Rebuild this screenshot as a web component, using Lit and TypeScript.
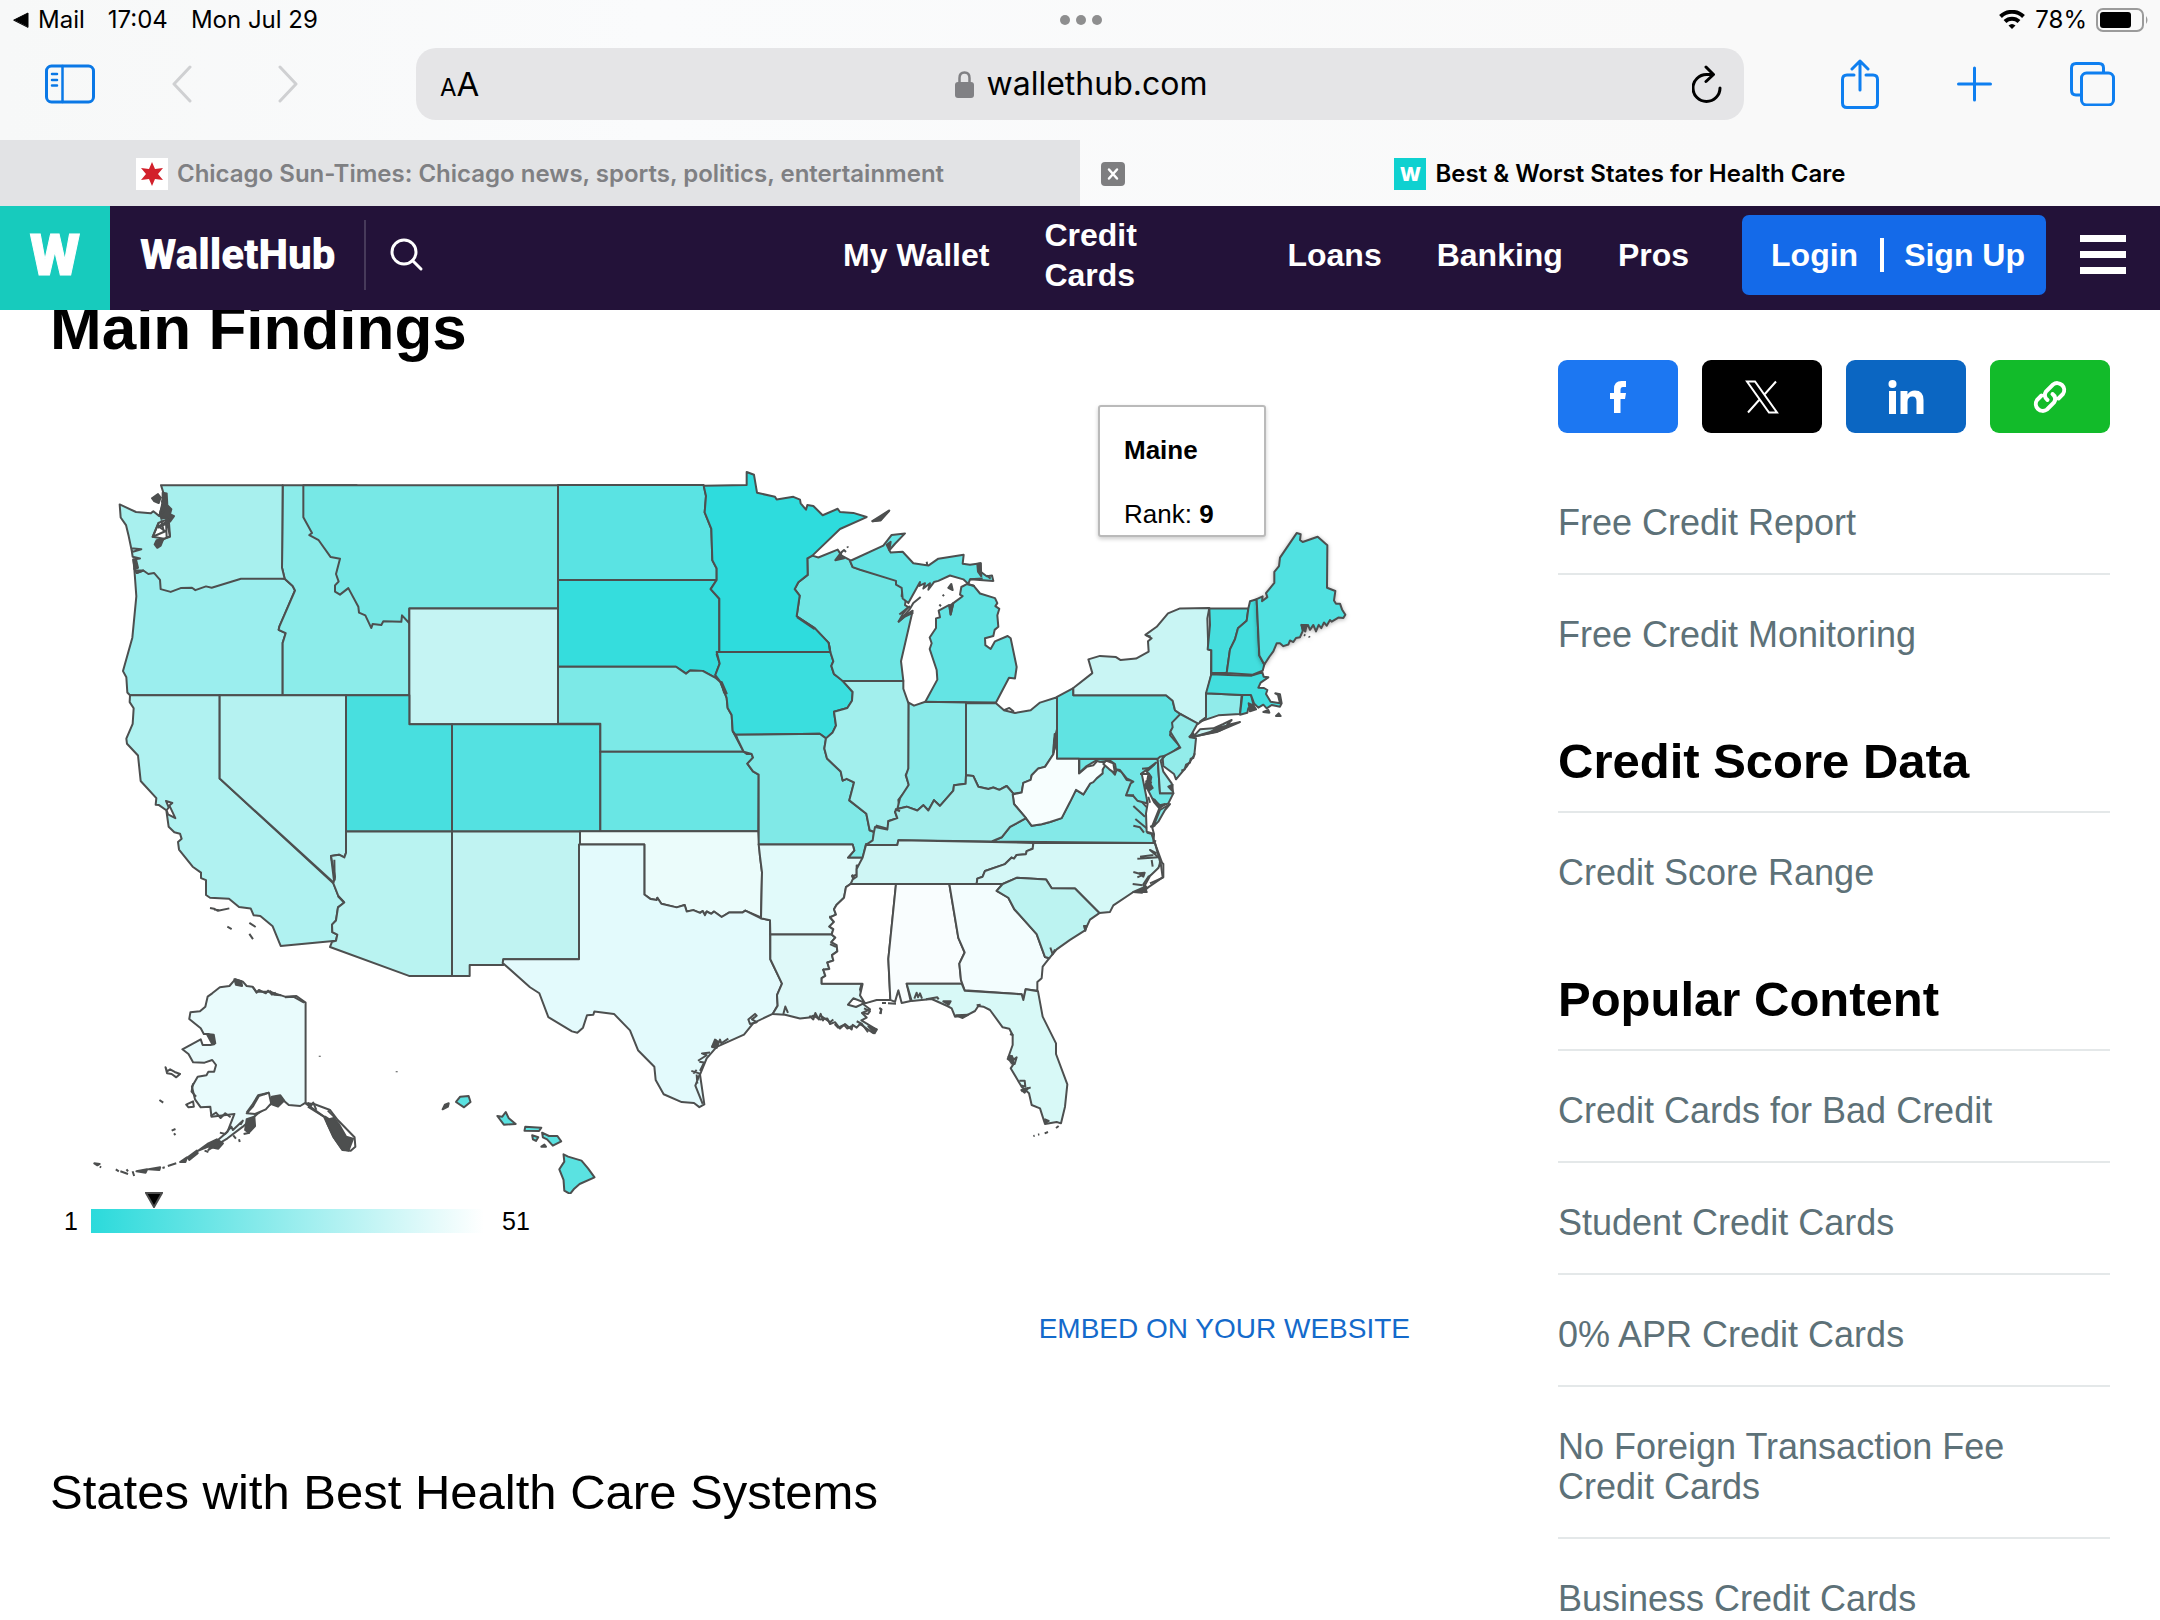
import { LitElement, html, svg, css } from "lit";
import { customElement } from "lit/decorators.js";

interface Shape {
  name: string;
  fill: string;
  d: string;
}

interface Region {
  transform: string;
  shapes: Shape[];
  islands?: string;
  water?: string;
  coast?: string;
}

const s = (name: string, fill: string, d: string): Shape => ({ name, fill, d });

const THIRD = 1 / 3;

/* Each region keeps its own drawing grid and is placed on the map by a transform. */
const REGIONS: Region[] = [
  {
    transform: `translate(90 450) scale(${THIRD} .3444)`,
    shapes: [
      s("Oregon", "#9beeee", "M133,345 L139,425 127,545 99,642 109,660 112,704 120,712 H578 V560 L587,532 566,522 568,513 615,408 608,395 584,374 500,360 300,380 200,350Z"),
      s("Idaho", "#8cecea", "M578,102 H800 V430 L844,480 H958 V712 H578 V560 L587,532 566,522 568,513 615,408 608,395 584,374 576,342Z"),
      s("Washington", "#a8f0ee", "M213,102 H578 L576,342 584,374 H453 L365,400 348,396 316,407 306,400 272,401 242,412 212,404 210,377 192,357 175,360 160,350 140,357 133,345 130,318 150,315 128,310 124,285 154,288 126,296 116,250 108,218 92,196 89,158 138,180 182,184 190,178 208,192 216,160 222,130Z"),
      s("Montana", "#77e8e6", "M640,102 H1404 V460 H958 V503 L936,480 934,499 880,497 874,508 848,505 844,517 826,480 807,472 805,455 775,401 750,420 735,411 735,393 746,382 738,360 750,316 722,311 686,262 658,247 666,241 640,195Z"),
      s("Wyoming", "#c5f4f3", "M958,460 H1404 V796 H958Z"),
      s("California", "#b0f2f1", "M120,712 L119,732 131,750 128,795 109,838 111,853 144,887 152,961 199,1011 197,1030 207,1031 229,1046 236,1094 253,1110 270,1114 275,1129 264,1138 267,1160 308,1210 333,1227 333,1243 348,1249 348,1292 360,1300 417,1303 447,1327 482,1331 491,1351 511,1353 548,1383 572,1440 738,1425 742,1407 727,1400 726,1378 738,1366 744,1328 763,1314 745,1295 730,1258 389,954 V712Z"),
      s("Nevada", "#b5f2f1", "M389,712 H768 V1170 L763,1183 747,1175 723,1179 733,1258 389,954Z"),
      s("Utah", "#48dfdf", "M768,712 H958 V796 H1086 V1108 H768Z"),
      s("Arizona", "#b9f3f1", "M768,1108 H1086 V1527 H957 L720,1443 726,1428 738,1425 742,1407 727,1400 726,1378 738,1366 744,1328 763,1314 745,1295 730,1258 735,1240 723,1179 747,1175 763,1183 768,1170Z"),
      s("Colorado", "#54e1e1", "M1086,796 H1531 V1108 H1086Z"),
      s("New Mexico", "#c0f3f2", "M1086,1108 H1470 V1479 H1240 V1495 H1139 V1527 H1086Z"),
    ],
    water: "M228,1019 L247,1025 238,1032 256,1069 234,1058 230,1046 236,1038Z M205,212 L236,200 240,250 222,258 188,252Z",
    islands:
      "M186,140 L204,128 212,138 206,154 192,148Z M218,124 L230,126 232,160 244,172 240,186 252,192 240,208 228,196 214,200 210,182 218,160Z M200,262 L220,258 212,278 202,284 194,274Z M130,318 L138,318 144,342 134,346Z",
    coast:
      "M222,130 L216,150 228,168 212,190 236,204 206,222 226,236 188,252 206,212 M230,200 L240,252 222,258 206,270 M214,204 L222,240 M204,226 L232,212 M228,206 L230,254 M360,1330 L372,1332 384,1338 418,1331 M372,1334 L388,1336 M412,1384 L425,1391 M478,1373 L497,1385 M478,1405 L489,1420 M136,350 L160,350 140,357 M733,1190 L734,1250 M744,1296 L762,1313",
  },
  {
    transform: `translate(540 450) scale(${THIRD} .4592)`,
    shapes: [
      s("North Dakota", "#5ae3e3", "M54,76 H491 L498,100 494,136 514,172 517,240 530,258 530,283 H54Z"),
      s("South Dakota", "#35dddd", "M54,283 H530 L512,303 538,324 538,440 530,445 539,465 526,490 540,502 528,497 488,481 450,480 438,487 408,472 H54Z"),
      s("Nebraska", "#7ce9e7", "M54,472 H408 L438,487 450,480 488,481 528,497 541,505 560,540 563,562 575,577 578,612 611,657 H181 V596 H54Z"),
      s("Kansas", "#69e6e4", "M181,657 H611 L620,662 635,662 639,670 622,683 639,700 656,707 655,830 H181Z"),
      s("Oklahoma", "#ebfcfb", "M120,830 H655 L660,885 666,920 663,1018 616,1003 608,1007 568,1007 545,1017 522,1005 514,1010 500,1005 495,1013 488,1004 480,1008 460,1002 440,1005 434,991 410,996 364,988 352,975 350,980 332,978 313,968 V859 H120Z"),
      s("Texas", "#e3fafc", "M117,859 H313 V968 L332,978 350,980 352,975 364,988 410,996 434,991 440,1005 460,1002 480,1008 488,1004 495,1013 500,1005 514,1010 522,1005 545,1017 568,1007 608,1007 616,1003 663,1020 690,1024 691,1109 726,1162 711,1187 713,1210 698,1228 640,1248 612,1273 530,1300 500,1325 480,1360 493,1425 478,1431 462,1422 425,1420 371,1403 347,1372 343,1343 294,1307 270,1264 222,1228 163,1223 160,1230 141,1231 129,1258 112,1269 96,1266 25,1235 -2,1183 -30,1170 -112,1117 -110,1109 H117Z"),
      s("Iowa", "#3adede", "M530,440 H871 L880,460 874,470 882,488 908,501 938,527 936,546 922,562 882,570 888,600 878,615 858,628 839,618 586,620 578,612 575,577 563,562 560,540 541,505 526,490 539,465Z"),
      s("Wisconsin", "#6ee6e4", "M802,236 L817,230 835,234 893,217 905,230 930,240 938,255 1070,283 1070,292 1088,300 1085,318 1098,322 1095,338 1105,342 1090,355 1076,374 1100,358 1118,350 1083,460 1090,503 H908 L882,488 874,470 880,460 871,440 866,420 824,388 770,362 779,317 764,303 775,288 803,272Z"),
      s("Minnesota", "#2edcdd", "M491,78 L620,76 620,48 642,54 651,93 705,102 710,108 760,102 780,108 782,116 798,130 802,120 820,122 848,142 893,128 900,135 940,137 980,146 900,172 817,230 802,236 803,272 775,288 764,303 779,317 770,362 824,388 866,420 871,440 H538 V324 L512,303 530,283 530,258 517,240 514,172 494,136 498,100Z"),
      s("Missouri", "#80e9e7", "M586,620 L839,618 858,628 853,650 861,672 902,700 908,720 920,716 942,724 928,763 979,792 989,828 1002,832 998,858 978,858 968,888 924,888 943,872 938,859 H656 V707 L639,700 622,683 639,670 635,662 611,657Z"),
      s("Arkansas", "#e1fafa", "M656,859 H938 L943,872 924,888 968,888 958,905 950,905 950,925 936,928 944,940 932,945 918,952 912,975 890,990 882,1000 888,1012 870,1018 882,1028 868,1038 880,1044 875,1055 H691 L690,1024 663,1020 666,920 660,885Z"),
      s("Louisiana", "#dff9f9", "M691,1055 H875 L886,1062 874,1072 890,1078 892,1092 876,1100 880,1112 862,1116 868,1130 850,1132 856,1145 845,1150 845,1162 H965 L960,1175 972,1203 940,1194 924,1208 948,1213 968,1206 990,1218 966,1226 980,1236 964,1242 1010,1262 1000,1270 960,1250 950,1258 938,1252 935,1262 915,1250 900,1260 885,1246 870,1250 862,1238 840,1240 820,1232 808,1236 780,1238 735,1230 698,1228 713,1210 711,1187 726,1162 691,1109Z"),
      s("Illinois", "#a2efed", "M908,503 H1090 L1090,520 1106,553 V695 L1097,708 1108,732 1075,762 1078,780 1065,788 1072,802 1045,808 1045,825 1010,818 1004,832 989,828 979,792 928,763 942,724 920,716 908,720 902,700 861,672 853,650 858,628 878,615 888,600 882,570 922,562 936,546 938,527Z"),
    ],
    islands:
      "M998,155 L1015,150 1047,133 1022,152Z M886,240 L905,222 900,232 912,236Z M545,505 L560,530 552,528Z M525,1284 L536,1290 530,1302 516,1300Z M985,1255 L1010,1262 1004,1270Z",
    coast:
      "M625,1240 L645,1228 650,1232 636,1240 650,1246 630,1250Z M730,1228 L736,1212 744,1226 M454,1352 L480,1358 466,1384 488,1424 M470,1360 L472,1380 M460,1358 L470,1350 M474,1330 L500,1318 486,1314 510,1312 M478,1332 L492,1334 480,1352 M516,1300 L528,1286 532,1296 540,1284 544,1292 565,1282 M808,1232 L820,1240 826,1226 836,1240 842,1228 850,1244 M846,1234 L870,1246 880,1240 M884,1250 L894,1258 912,1252 922,1260 936,1254 M950,1244 L966,1250 984,1268 M972,1216 L990,1222 984,1228 968,1226 M1018,1215 L1024,1218 1020,1228 M905,222 L912,218 918,222 M922,210 L924,213 M965,1206 L1010,1196 1048,1196 M771,364 L824,390 M866,420 L870,438 M578,612 L592,628 M868,1016 L884,1020 M870,1076 L888,1082 M848,1130 L860,1138 M935,925 L948,934",
  },
  {
    transform: `translate(860 450) scale(${THIRD} .3827)`,
    shapes: [
      s("Michigan", "#64e4e4", "M-30,290 L70,250 95,222 135,218 105,245 88,262 92,268 128,266 160,296 205,302 235,284 311,274 308,297 330,300 362,296 362,318 380,330 396,328 400,342 330,338 325,350 310,338 270,328 235,342 222,345 205,365 210,348 190,362 195,348 178,355 180,345 145,400 128,388 125,360 108,352 108,342 0,313 -22,306Z"),
      s("Michigan", "#64e4e4", "M196,658 L232,600 230,575 209,520 215,505 209,490 228,465 228,440 240,437 236,420 268,405 272,430 280,400 308,382 300,378 304,358 322,350 340,354 360,375 405,387 412,400 406,408 418,415 412,432 415,462 404,470 400,486 375,492 376,510 392,520 405,500 443,486 452,492 470,567 465,597 447,595 408,660Z"),
      s("Indiana", "#89eae9", "M146,660 L162,668 196,658 318,660 V850 L317,872 282,876 280,890 240,930 222,915 205,942 190,928 172,942 140,932 112,938 120,910 146,875 138,850 145,832Z"),
      s("Ohio", "#99edec", "M318,662 H408 L432,680 465,687 512,680 540,660 591,646 V730 L582,760 580,795 555,828 535,832 515,850 512,862 490,870 485,895 460,898 440,878 418,888 400,882 385,886 355,880 340,852 318,850Z"),
      s("Pennsylvania", "#60e3e2", "M591,645 L640,622 V641 H918 L938,655 945,680 965,692 932,735 930,745 960,775 925,797 895,807 H591Z"),
      s("New York", "#c9f5f4", "M640,622 L697,583 685,547 720,538 768,541 782,549 828,545 866,527 864,500 875,492 856,483 890,462 924,427 960,414 1048,413 1042,440 1045,520 1054,524 1053,590 1040,638 1038,700 1014,716 965,692 945,680 938,655 918,641 640,641Z"),
      s("Virginia", "#84e9e8", "M395,1023 L425,1012 450,985 498,962 515,982 545,978 570,972 605,962 648,888 670,900 690,872 710,850 728,835 732,812 765,848 770,835 785,842 800,862 823,865 808,900 830,905 862,935 862,1000 882,1005 880,1027Z"),
      s("West Virginia", "#f7fefe", "M591,750 L591,807 H657 V845 L680,828 700,824 712,812 740,818 728,835 728,845 710,858 700,868 690,872 670,900 648,888 630,920 605,962 570,972 545,978 515,982 498,962 462,925 458,900 485,895 490,870 512,862 515,850 535,832 555,828 580,795Z"),
      s("Kentucky", "#a3eeec", "M45,985 L82,992 85,970 112,962 105,945 112,938 140,932 172,942 190,928 205,942 222,915 240,930 280,890 282,876 317,872 318,850 340,852 355,880 385,886 400,882 418,888 440,878 460,898 458,900 462,925 498,962 450,985 425,1012 395,1023 115,1020 112,1032 18,1032 38,1020 42,998Z"),
      s("Tennessee", "#cff6f5", "M18,1032 H112 L115,1020 395,1024 520,1027 518,1042 500,1048 498,1056 470,1058 462,1068 455,1065 435,1082 375,1100 368,1115 352,1120 350,1134 H-28 L-22,1122 -10,1115 -10,1095 0,1078 8,1065Z"),
      s("North Carolina", "#d5f8f7", "M520,1027 H885 L900,1075 898,1090 880,1108 865,1115 850,1135 860,1155 820,1155 760,1190 750,1207 718,1210 645,1146 575,1145 558,1122 470,1118 428,1134 H350 L352,1120 368,1115 375,1100 435,1082 455,1065 462,1068 470,1058 498,1056 500,1048 518,1042Z"),
      s("Mississippi", "#ffffff", "M-28,1134 H108 L85,1330 91,1437 50,1437 15,1446 0,1425 8,1395 H-115 L-115,1380 -104,1374 -110,1358 -92,1356 -98,1339 -80,1334 -84,1320 -68,1310 -70,1294 -86,1286 -74,1274 -85,1266 -80,1252 -92,1245 -78,1233 -90,1221 -72,1214 -78,1200 -70,1188 -48,1170 -42,1142Z"),
      s("Alabama", "#f9fdfe", "M108,1134 H268 L295,1275 314,1313 298,1342 303,1385 308,1395 H140 L152,1440 125,1445 115,1412 105,1442 91,1437 85,1330Z"),
      s("Georgia", "#f3fdfe", "M268,1134 H428 L410,1152 445,1170 463,1200 530,1265 555,1325 568,1328 548,1350 545,1380 532,1390 532,1413 497,1409 490,1437 485,1422 314,1412 303,1385 298,1342 314,1313 295,1275Z"),
      s("South Carolina", "#bcf3f1", "M428,1134 L470,1118 558,1122 575,1145 645,1146 718,1210 690,1227 675,1255 630,1280 590,1305 568,1328 555,1325 530,1265 463,1200 445,1170 410,1152Z"),
    ],
    water: "M732,815 L742,812 762,828 765,848Z",
    islands:
      "M37,186 L55,176 88,158 62,184Z M265,360 L274,350 278,366Z M268,408 L280,400 272,430Z M584,742 L590,742 588,770 580,790Z M80,248 L92,240 88,262Z M352,298 L362,296 364,330 354,318Z M672,1244 L680,1244 676,1256Z",
    coast:
      "M248,378 L252,382 M238,404 L243,408 M322,350 L344,356 M330,338 L368,336 M432,680 L448,674 462,684 M380,328 L392,336 M182,384 L160,400 150,415 116,448 135,435 160,425 M118,430 L150,408 M200,292 L202,302 M571,1300 L578,1318 585,1305 M856,483 L872,488 M105,938 L120,944",
  },
  {
    transform: `translate(1050 640) scale(${THIRD})`,
    shapes: [
      s("Connecticut", "#90ebea", "M468,160 L575,165 570,222 505,226 450,245 468,232Z"),
      s("Rhode Island", "#40dede", "M577,165 H603 L612,200 595,205 592,218 570,224Z"),
      s("Massachusetts", "#42dede", "M484,103 L535,105 605,107 637,97 641,110 655,112 632,128 625,143 642,144 652,150 648,162 662,185 690,190 684,165 676,160 690,163 695,190 690,200 665,195 650,205 640,194 625,203 612,190 603,165 575,165 468,160Z"),
      s("New Jersey", "#93ecea", "M391,222 L443,250 420,292 438,295 433,345 410,380 378,418 372,402 340,378 338,355 345,347 391,323 361,275 368,262 366,248Z"),
      s("Maryland", "#72e7e6", "M88,357 H323 L330,460 H370 L355,490 330,500 315,480 295,470 290,490 262,482 250,468 228,466 235,448 242,430 250,425 230,415 210,390 198,388 195,372 180,362 150,365 138,362 110,378 88,398Z"),
      s("Delaware", "#9ceeee", "M323,357 L330,350 345,347 332,362 340,395 365,430 370,460 330,460Z"),
      s("Virginia", "#84e9e8", "M360,492 L330,510 310,560 325,545 345,510Z"),
      s("New York", "#c9f5f4", "M430,290 L450,268 490,265 520,252 545,240 530,256 570,246 510,272Z"),
    ],
    water: "M318,368 L275,400 285,450 293,490 288,520 290,575 312,582 306,560 328,505 312,486 295,452 302,410 290,395Z M332,668 L325,684 300,708 285,735 290,745 338,712Z M160,372 L168,362 190,370 195,400 178,388Z",
    islands:
      "M296,400 L304,412 300,430 308,444 296,452 286,436 292,420Z M312,480 L330,496 345,492 330,504Z M596,190 L610,196 618,208 600,214Z M640,216 L655,210 658,218Z M678,228 L686,220 692,228Z M505,262 L540,256 500,276 440,288 480,276Z M418,290 L430,280 432,292Z M355,440 L368,434 366,452Z M268,700 L284,698 280,710Z M286,740 L292,744 276,758 250,756Z",
    coast:
      "M434,340 L430,354 422,356 420,368 408,374 404,388 394,392 M250,498 L285,530 M256,537 L290,565 M250,557 L270,562 282,578 M305,583 L336,668 340,672 340,712 300,730 M262,656 L325,652 300,630 320,640 M270,650 L310,645 M305,660 L308,680 M250,696 L280,704 262,712 M248,732 L278,736 M300,560 L316,556 M315,372 L300,384 276,386 M270,402 L300,402 M286,424 L306,428 M284,444 L304,448 M310,600 L318,605 M228,466 L252,466 M295,470 L300,488",
  },
  {
    transform: `translate(860 930) scale(${THIRD})`,
    shapes: [
      s("Florida", "#d8f9f7", "M140,161 H305 L314,182 485,193 490,210 497,178 534,184 548,260 588,340 588,372 622,463 615,530 603,580 590,576 555,582 540,535 515,525 507,490 485,470 452,415 462,400 443,387 458,345 458,315 448,296 428,292 390,240 370,230 355,228 345,243 320,256 285,260 275,235 262,228 215,207 155,213Z"),
    ],
    islands:
      "M288,256 L325,254 308,264Z M446,380 L456,378 460,394 452,396Z M484,480 L504,474 494,488Z M250,214 L272,214 266,224Z M555,568 L566,573 558,578Z",
    coast:
      "M163,206 L170,188 174,202 180,190 186,206 M448,376 L462,388 470,382 464,402 452,400 M478,452 L494,452 496,470 484,466 M484,484 L512,472 M66,219 L78,219 M84,220 L108,221 M60,240 L64,238 62,252 M198,208 L232,202 236,208 M450,312 L460,316 M520,618 L524,617 M534,614 L538,613 M554,610 L564,606 M588,594 L596,588 M350,226 L362,224",
  },
  {
    transform: `translate(1080 380) scale(${THIRD} .4082)`,
    shapes: [
      s("Vermont", "#45dede", "M388,560 H505 L500,590 474,608 465,635 450,660 440,718 H394 V662 L383,660 390,600Z"),
      s("New Hampshire", "#42dede", "M505,560 L510,542 530,537 538,675 553,697 548,712 518,722 440,718 450,660 465,635 474,608 500,590Z"),
    ],
  },
  {
    transform: "translate(40 950) scale(.3827 .3333)",
    shapes: [
      s("Alaska", "#e9fbfc", "M694,158 V458 L680,468 650,465 625,440 600,465 570,490 530,530 490,565 440,600 455,580 490,545 508,492 448,500 445,470 420,472 405,448 397,410 412,380 435,376 440,365 455,365 460,345 450,330 430,338 400,337 388,312 372,298 420,268 425,285 445,285 455,283 450,265 440,252 428,252 420,235 390,207 393,187 418,184 432,170 438,140 450,130 470,112 495,108 510,88 530,95 540,108 555,110 565,125 600,125 640,140 670,138Z"),
      s("Hawaii", "#5ae2e1", "M1087,456 L1098,440 1120,438 1125,456 1108,472Z"),
      s("Hawaii", "#5ae2e1", "M1195,498 L1208,500 1217,486 1225,505 1243,522 1212,524Z"),
      s("Hawaii", "#5ae2e1", "M1268,530 L1310,533 1304,543 1266,542Z"),
      s("Hawaii", "#5ae2e1", "M1286,556 L1302,562 1296,573 1288,568Z"),
      s("Hawaii", "#5ae2e1", "M1312,548 L1330,558 1352,558 1362,574 1340,587 1325,568 1314,562Z"),
      s("Hawaii", "#5ae2e1", "M1368,613 L1380,620 1415,632 1432,655 1449,682 1410,702 1396,716 1385,732 1370,722 1368,690 1357,658 1370,635Z"),
    ],
    water: "M598,428 L572,438 556,470 540,490 562,492 590,478 604,460Z M694,460 L716,462 758,480 778,510 822,562 824,590 812,602 790,600 766,560 742,500Z",
    islands:
      "M745,500 L756,508 768,504 782,524 800,560 818,566 806,602 790,598 768,562 752,524Z M606,440 L628,436 638,452 622,470 604,462Z M540,508 L560,500 562,528 546,548 536,540Z M366,636 L384,622 380,636Z M386,622 L410,602 412,610 390,630Z M414,602 L440,580 462,568 478,580 466,596 440,590Z M252,664 L280,658 276,668Z M284,658 L314,652 312,660Z M436,252 L454,254 458,280 450,282Z M508,88 L526,94 528,108 512,104Z M1052,478 L1058,464 1068,460 1066,470Z M1310,590 L1318,584 1322,590Z M142,640 L156,642 150,646Z",
    coast:
      "M328,352 L332,364 340,358 352,366 366,372 356,382 344,372 332,370Z M556,110 L566,128 572,120 590,130 596,122 606,134 616,128 M584,434 L598,428 M540,488 L556,462 570,436 598,428 M532,552 L548,548 M446,498 L460,488 472,504 484,490 498,502 M382,464 L400,454 402,470 388,472Z M312,450 L322,458 M344,542 L354,537 M350,550 L354,555 M198,658 L206,664 M210,664 L230,672 M226,658 L230,664 M242,664 L246,678 M156,650 L160,652 M320,654 L326,652 M334,648 L356,640 M505,556 L512,566 M520,568 L522,576 M430,602 L440,606 M470,548 L484,552 500,530 504,540 530,512 524,524 M700,458 L708,468 714,458 722,480 M700,470 L722,486 742,500 M752,482 L768,500 772,512 M731,317 L731,320 M932,364 L932,367 M600,122 L612,134 630,136 M640,142 L662,140 690,158 M400,400 L396,425 408,440",
  },
];

const MAINE =
  "M530,537 L548,530 546,542 562,532 558,522 583,497 583,470 597,456 600,435 650,375 662,378 660,392 668,397 713,384 742,405 741,509 766,517 762,540 768,548 780,548 786,562 796,575 790,583 775,582 755,592 750,588 740,602 732,594 724,608 716,600 708,616 700,600 690,612 684,600 676,608 665,600 668,615 660,630 648,632 640,642 630,638 625,648 610,652 600,645 590,645 580,665 568,678 553,697 538,675Z";

const RANK = { state: "Maine", rank: 9, worst: 51 };

@customElement("state-map")
class StateMap extends LitElement {
  static styles = css`
    :host {
      display: block;
      position: relative;
      font-family: "Liberation Sans", Arial, sans-serif;
      color: #000;
    }
    .map {
      display: block;
      width: 100%;
      height: auto;
    }
    .state,
    .coast,
    .islands,
    .water {
      stroke: #4d4f4f;
      stroke-width: 2px;
      stroke-linejoin: round;
      vector-effect: non-scaling-stroke;
    }
    .coast {
      fill: none;
    }
    .islands {
      fill: #4d4f4f;
    }
    .water {
      fill: #fff;
    }
    .active {
      filter: drop-shadow(0 1px 2px rgba(0, 0, 0, 0.3));
    }
    .tip {
      position: absolute;
      left: 1048px;
      top: 37px;
      box-sizing: border-box;
      width: 168px;
      height: 132px;
      padding: 27px 24px 0;
      background: #fff;
      border: 2px solid #bababa;
      border-radius: 3px;
      box-shadow: 0 2px 4px rgba(0, 0, 0, 0.2);
      font-size: 26px;
      line-height: 32px;
    }
    .tip p {
      margin: 0 0 32px;
    }
    .legend {
      display: flex;
      align-items: center;
      padding: 15px 0 0 14px;
      font-size: 25px;
      line-height: 24px;
    }
    .low {
      width: 27px;
    }
    .bar {
      position: relative;
      width: 393px;
      height: 24px;
      margin-right: 18px;
      background: linear-gradient(90deg, #2bdadb, #fff);
    }
    .marker {
      position: absolute;
      bottom: 25px;
      width: 18px;
      height: 16px;
      margin-left: -9px;
    }
  `;

  render() {
    const place = ((RANK.rank - 1) / (RANK.worst - 1)) * 100;
    return html`
      <svg class="map" viewBox="50 368 1360 826" role="img" aria-label="State ranks">
        ${REGIONS.map(
          (r) => svg`<g transform=${r.transform}>
            ${r.shapes.map((x) => svg`<path class="state" fill=${x.fill} d=${x.d}></path>`)}
            ${r.water ? svg`<path class="water" d=${r.water}></path>` : null}
            ${r.islands ? svg`<path class="islands" d=${r.islands}></path>` : null}
            ${r.coast ? svg`<path class="coast" d=${r.coast}></path>` : null}
          </g>`
        )}
        <g class="active"><g transform="translate(1080 380) scale(.33333 .4082)">
          <path class="state" fill="#50e1e1" d=${MAINE}></path>
          <path class="islands" d="M664,600 L680,600 676,616 668,610Z M672,624 L676,626 M687,628 L689,631"></path>
        </g></g>
      </svg>
      <div class="tip">
        <p><strong>${RANK.state}</strong></p>
        <p>Rank: <strong>${RANK.rank}</strong></p>
      </div>
      <div class="legend">
        <span class="low">1</span>
        <div class="bar">
          <svg class="marker" style="left:${place}%" viewBox="0 0 18 16"><path d="M1,1 H17 L9,15Z" fill="#000" stroke="#4d4d4d" stroke-width="2"></path></svg>
        </div>
        <span>${RANK.worst}</span>
      </div>
    `;
  }
}

@customElement("browser-chrome")
class BrowserChrome extends LitElement {
  static styles = css`
    :host {
      display: block;
      font-family: Inter, "Liberation Sans", sans-serif;
      color: #000;
      background: linear-gradient(90deg, #f7f8f8, #fafbfc 30%, #f9f9f9 80%);
    }
    svg {
      display: block;
      fill: none;
      stroke-linecap: round;
      stroke-linejoin: round;
    }
    button {
      display: block;
      padding: 0;
      border: 0;
      background: none;
      font: inherit;
      color: inherit;
    }
    .status {
      display: grid;
      grid-template-columns: 1fr auto 1fr;
      align-items: center;
      height: 40px;
      padding: 0 11px 0 13px;
      font-size: 24px;
      line-height: 28px;
    }
    .left,
    .right {
      display: flex;
      align-items: center;
    }
    .left {
      gap: 23px;
    }
    .back {
      display: flex;
      align-items: center;
      gap: 9px;
    }
    .right {
      justify-content: flex-end;
      gap: 9px;
    }
    .toolbar {
      display: flex;
      align-items: center;
      height: 72px;
      padding: 8px 45px 20px;
    }
    .prev {
      margin-left: 77px;
    }
    .next {
      margin-left: 86px;
    }
    .address {
      flex: 1;
      display: grid;
      grid-template-columns: 1fr auto 1fr;
      align-items: center;
      height: 72px;
      margin: 0 97px 0 118px;
      padding: 0 22px 0 24px;
      box-sizing: border-box;
      border-radius: 20px;
      background: #e5e5e7;
    }
    .aa {
      display: flex;
      align-items: baseline;
      padding-top: 3px;
      font-size: 33px;
      line-height: 40px;
    }
    .small {
      font-size: 24px;
    }
    .url {
      display: flex;
      align-items: center;
      gap: 13px;
      font-size: 32px;
      line-height: 40px;
    }
    .reload {
      justify-self: end;
    }
    .share {
      margin-right: 78px;
    }
    .plus {
      margin-right: 78px;
    }
    .tabs {
      display: grid;
      grid-template-columns: 1fr 1fr;
      height: 66px;
      font-size: 24px;
      font-weight: 600;
      line-height: 32px;
    }
    .tab {
      display: grid;
      grid-template-columns: 1fr auto 1fr;
      align-items: center;
      padding: 2px 21px 0;
    }
    .idle {
      background: #e2e3e5;
      color: #7f8083;
    }
    .title {
      grid-column: 2;
      display: flex;
      align-items: center;
      gap: 9px;
      white-space: nowrap;
    }
    .close {
      justify-self: start;
    }
    .fav {
      width: 32px;
      height: 32px;
    }
    .favw {
      background: #0fd1d0;
      color: #fff;
      font: 800 20px/32px "Open Sans", sans-serif;
      text-align: center;
    }
  `;

  render() {
    return html`
      <div class="status">
        <div class="left">
          <span class="back"><svg width="16" height="16" viewBox="0 0 16 16"><path d="M1,8 L15,1 V15Z" fill="#000" stroke="#000"></path></svg>Mail</span>
          <span>17:04</span><span>Mon Jul 29</span>
        </div>
        <svg width="42" height="10" viewBox="0 0 42 10"><g fill="#8e8e8f"><circle cx="5" cy="5" r="5"></circle><circle cx="21" cy="5" r="5"></circle><circle cx="37" cy="5" r="5"></circle></g></svg>
        <div class="right">
          <svg width="28" height="20" viewBox="0 0 28 20" stroke="#000" stroke-width="4"><path d="M2.500,6.500 A16.500,16.500 0 0 1 25.500,6.500 M7,11.500 A10,10 0 0 1 21,11.500" stroke-linecap="butt"></path><path d="M10.500,15.500 Q14,12.500 17.500,15.500 L14,19Z" fill="#000" stroke="none"></path></svg>
          <span>78%</span>
          <svg width="53" height="24" viewBox="0 0 53 24"><rect x="1" y="1" width="46" height="22" rx="6" stroke="#9b9b9b" stroke-width="2"></rect><rect x="4" y="4" width="31" height="16" rx="3" fill="#000"></rect><path d="M50,8 Q53,12 50,16Z" fill="#9b9b9b"></path></svg>
        </div>
      </div>
      <div class="toolbar">
        <button aria-label="Sidebar"><svg width="50" height="40" viewBox="0 0 50 40" stroke="#0a78e6" stroke-width="3"><rect x="1.500" y="2" width="47" height="36" rx="5"></rect><path d="M17.500,2 V38 M7,10 H12 M7,16 H12 M7,21.500 H12" stroke-width="2.500"></path></svg></button>
        <button class="prev" aria-label="Back"><svg width="20" height="38" viewBox="0 0 20 38" stroke="#cfd0d2" stroke-width="3"><path d="M18,2 L2,19 18,36"></path></svg></button>
        <button class="next" aria-label="Forward"><svg width="20" height="38" viewBox="0 0 20 38" stroke="#cfd0d2" stroke-width="3"><path d="M2,2 L18,19 2,36"></path></svg></button>
        <div class="address">
          <button class="aa" aria-label="Text size"><span class="small">A</span>A</button>
          <div class="url">
            <svg width="19" height="27" viewBox="0 0 19 27"><rect x="0" y="11" width="19" height="16" rx="3" fill="#808084"></rect><path d="M4.500,11 V7 Q4.500,1.500 9.500,1.500 Q14.500,1.500 14.500,7 V11" stroke="#808084" stroke-width="2.500"></path></svg>
            wallethub.com
          </div>
          <button class="reload" aria-label="Reload"><svg width="30" height="38" viewBox="0 0 30 38" stroke="#000" stroke-width="3"><path d="M28,23 A13.500,13.500 0 1 1 14.500,9.500 H20 M14,2 L21.500,9.500 14,16.500"></path></svg></button>
        </div>
        <button class="share" aria-label="Share"><svg width="38" height="50" viewBox="0 0 38 50" stroke="#0f7ff0" stroke-width="3"><path d="M13,16 H6 Q1.500,16 1.500,20.500 V44 Q1.500,48.500 6,48.500 H32 Q36.500,48.500 36.500,44 V20.500 Q36.500,16 32,16 H25 M19,31 V2 M11,10 L19,2 27,10"></path></svg></button>
        <button class="plus" aria-label="New tab"><svg width="35" height="36" viewBox="0 0 35 36" stroke="#0f7ff0" stroke-width="3"><path d="M17.500,2 V34 M1.500,18 H33.500"></path></svg></button>
        <button aria-label="Tabs"><svg width="45" height="44" viewBox="0 0 45 44" stroke="#0f7ff0" stroke-width="3"><path d="M10,33 H6 Q1.500,33 1.500,28 V6 Q1.500,1.500 6,1.500 H29 Q33.500,1.500 33.500,6 V10"></path><rect x="11.500" y="11" width="32" height="32" rx="5"></rect></svg></button>
      </div>
      <div class="tabs">
        <div class="tab idle">
          <div class="title">
            <svg class="fav" viewBox="0 0 32 32"><rect width="32" height="32" fill="#fff"></rect><path d="M16,4 L19,11 27,10 22,16 27,22 19,21 16,28 13,21 5,22 10,16 5,10 13,11Z" fill="#d2202b"></path></svg>
            Chicago Sun-Times: Chicago news, sports, politics, entertainment
          </div>
        </div>
        <div class="tab">
          <button class="close" aria-label="Close tab"><svg width="24" height="24" viewBox="0 0 24 24"><rect width="24" height="24" rx="4" fill="#7e7e80"></rect><path d="M8,7.500 L16,16.500 M16,7.500 L8,16.500" stroke="#fff" stroke-width="2.500"></path></svg></button>
          <div class="title"><span class="fav favw">W</span>Best &amp; Worst States for Health Care</div>
        </div>
      </div>
    `;
  }
}

@customElement("site-header")
class SiteHeader extends LitElement {
  static styles = css`
    :host {
      display: flex;
      position: relative;
      z-index: 1;
      height: 104px;
      background: #231239;
      color: #fff;
      font-family: "Liberation Sans", Arial, sans-serif;
    }
    a {
      color: inherit;
      text-decoration: none;
    }
    svg {
      display: block;
    }
    .tile {
      width: 110px;
      background: #17cbbd;
      font: 900 58px/98px Roboto, "Liberation Sans", sans-serif;
      -webkit-text-stroke: 1px #fff;
      text-align: center;
    }
    .row {
      flex: 1;
      display: flex;
      align-items: center;
      height: 98px;
    }
    .brand {
      display: flex;
      width: 196px;
      margin-left: 30px;
      font: 900 42px/56px Roboto, "Liberation Sans", sans-serif;
      white-space: nowrap;
    }
    .search {
      margin-left: 28px;
      padding: 18px 0 18px 24px;
      border: 0;
      border-left: 2px solid #473a5a;
      background: none;
    }
    .nav {
      flex: 1;
      display: flex;
      align-items: center;
      justify-content: flex-end;
      gap: 55px;
      margin-right: 53px;
      font-size: 32px;
      line-height: 40px;
      font-weight: 700;
    }
    .cards {
      width: 188px;
    }
    .cards a {
      display: block;
      width: 100px;
    }
    .login {
      display: flex;
      align-items: center;
      height: 80px;
      padding: 0 21px 0 29px;
      margin-right: 34px;
      border-radius: 7px;
      background: #146ae9;
      font-size: 32px;
      line-height: 40px;
      font-weight: 700;
    }
    .bar {
      width: 4px;
      height: 34px;
      margin: 0 20px 0 22px;
      background: #fff;
    }
    .menu {
      margin-right: 34px;
      padding: 0;
      border: 0;
      background: none;
    }
  `;

  render() {
    return html`
      <a class="tile" href="#">W</a>
      <div class="row">
        <a class="brand" href="#">WalletHub</a>
        <button class="search" aria-label="Search"><svg width="34" height="34" viewBox="0 0 34 34" fill="none" stroke="#fff" stroke-width="3" stroke-linecap="round"><circle cx="14" cy="14" r="12"></circle><path d="M22.500,22.500 L31,31"></path></svg></button>
        <nav class="nav">
          <a href="#">My Wallet</a>
          <span class="cards"><a href="#">Credit Cards</a></span>
          <a href="#">Loans</a>
          <a href="#">Banking</a>
          <a href="#">Pros</a>
        </nav>
        <div class="login"><a href="#">Login</a><span class="bar"></span><a href="#">Sign Up</a></div>
        <button class="menu" aria-label="Menu"><svg width="46" height="40" viewBox="0 0 46 40" fill="#fff"><path d="M0,0 H46 V7 H0Z M0,16 H46 V23 H0Z M0,32 H46 V39 H0Z"></path></svg></button>
      </div>
    `;
  }
}

const SECTIONS = [
  { title: "Credit Score Data", links: ["Credit Score Range"] },
  {
    title: "Popular Content",
    links: ["Credit Cards for Bad Credit", "Student Credit Cards", "0% APR Credit Cards", "No Foreign Transaction Fee Credit Cards", "Business Credit Cards"],
  },
];

@customElement("app-root")
class AppRoot extends LitElement {
  static styles = css`
    :host {
      display: block;
      height: 100vh;
      overflow: hidden;
      background: #fff;
      color: #000;
      font-family: "Liberation Sans", Arial, sans-serif;
    }
    a {
      text-decoration: none;
    }
    .page {
      display: grid;
      grid-template-columns: minmax(0, 1fr) 552px;
      gap: 148px;
      padding: 0 50px;
    }
    h1 {
      margin: -18px 0 4px;
      font-size: 62px;
      line-height: 72px;
    }
    .embed {
      margin: 80px 0 0;
      text-align: right;
      font-size: 28px;
      line-height: 32px;
    }
    .embed a {
      color: #146acb;
    }
    h3 {
      margin: 119px 0 0;
      font-size: 49px;
      line-height: 56px;
      font-weight: 400;
    }
    .social {
      display: flex;
      gap: 24px;
      margin: 50px 0 30px;
    }
    .btn {
      flex: 1;
      display: flex;
      align-items: center;
      justify-content: center;
      height: 73px;
      padding: 0;
      border: 0;
      border-radius: 9px;
      color: #fff;
    }
    .fb {
      background: #1c77f2;
    }
    .x {
      background: #000;
    }
    .in {
      background: #0b66c2;
    }
    .cp {
      background: #12bb2a;
    }
    ul {
      margin: 0;
      padding: 0;
      list-style: none;
    }
    li {
      padding: 40px 0 30px;
      font-size: 36px;
      line-height: 40px;
    }
    li + li {
      border-top: 2px solid #e4e8e9;
    }
    li a {
      color: #5d7178;
    }
    h2 {
      margin: 48px 0 0;
      padding-bottom: 22px;
      border-bottom: 2px solid #e4e8e9;
      font-size: 49px;
      line-height: 56px;
    }
  `;

  links(items: string[]) {
    return html`<ul>${items.map((t) => html`<li><a href="#">${t}</a></li>`)}</ul>`;
  }

  render() {
    return html`
      <browser-chrome></browser-chrome>
      <site-header></site-header>
      <div class="page">
        <main>
          <h1>Main Findings</h1>
          <state-map></state-map>
          <p class="embed"><a href="#">EMBED ON YOUR WEBSITE</a></p>
          <h3>States with Best Health Care Systems</h3>
        </main>
        <aside>
          <div class="social">
            <button class="btn fb" aria-label="Facebook"><svg width="18" height="32" viewBox="0 0 18 32"><path d="M5,32 V18 H1 V12 H5 V8 Q5,0 12.500,0 H17 V6 H14 Q11.500,6 11.500,9 V12 H17 L16,18 H11.500 V32Z" fill="#fff"></path></svg></button>
            <button class="btn x" aria-label="X"><svg width="34" height="34" viewBox="0 0 34 34" fill="none" stroke="#fff" stroke-width="2"><path d="M2,1.500 H10 L32,32.500 H24Z M31,1.500 L19,15 M15,19 L3,32.500"></path></svg></button>
            <button class="btn in" aria-label="LinkedIn"><svg width="36" height="34" viewBox="0 0 36 34" fill="#fff"><circle cx="4.500" cy="4" r="4"></circle><path d="M1,11 H8 V34 H1Z M12.500,11 H19.500 V14.500 Q22,10.500 27,10.500 Q35.500,10.500 35.500,20 V34 H28.500 V21.500 Q28.500,16.500 24.500,16.500 Q19.500,16.500 19.500,22 V34 H12.500Z"></path></svg></button>
            <button class="btn cp" aria-label="Copy link"><svg width="34" height="34" viewBox="0 0 34 34" fill="none" stroke="#fff" stroke-width="4" stroke-linecap="round"><path d="M14.500,20 A6,6 0 0 1 13,11.500 L20,4.500 A7,7 0 0 1 30,14 L25.500,18.500 M19.500,14 A6,6 0 0 1 21,22.500 L14,29.500 A7,7 0 0 1 4,20 L8.500,15.500"></path></svg></button>
          </div>
          ${this.links(["Free Credit Report", "Free Credit Monitoring"])}
          ${SECTIONS.map((x) => html`<h2>${x.title}</h2>${this.links(x.links)}`)}
        </aside>
      </div>
    `;
  }
}
